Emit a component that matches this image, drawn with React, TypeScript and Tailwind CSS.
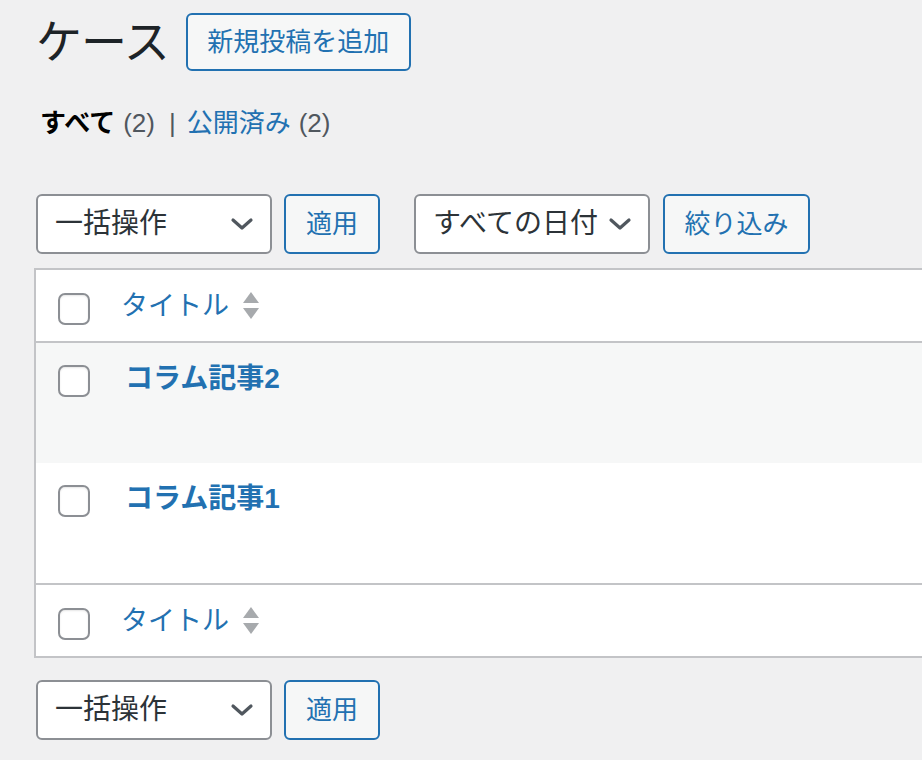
import React from "react";

const font = { fontFamily: '"Liberation Sans", "Noto Sans CJK JP", sans-serif' };

function Chevron() {
  return (
    <svg width="24" height="14" viewBox="0 0 24 14" className="shrink-0">
      <polyline points="3,3 12,11 21,3" fill="none" stroke="#50575e" strokeWidth="3.2" strokeLinecap="round" strokeLinejoin="round" />
    </svg>
  );
}

function Select({ label, w }: { label: string; w: string }) {
  return (
    <div className={`${w} h-[60px] flex items-center justify-between rounded-[6px] border-2 border-[#8c8f94] bg-white pl-[17px] pr-[16px] text-[28px] text-[#2c3338]`}>
      <span>{label}</span>
      <Chevron />
    </div>
  );
}

function Button({ label, w }: { label: string; w: string }) {
  return (
    <div className={`${w} h-[60px] flex items-center justify-center rounded-[6px] border-2 border-[#2271b1] bg-[#f6f7f7] text-[26px] text-[#2271b1]`}>
      {label}
    </div>
  );
}

function Checkbox() {
  return <div className="w-[32px] h-[32px] rounded-[7px] border-2 border-[#8c8f94] bg-white shrink-0 shadow-[inset_0_1px_2px_rgba(0,0,0,0.1)]" />;
}

function SortArrows() {
  return (
    <svg width="18" height="30" viewBox="0 0 18 30" className="ml-[13px] shrink-0">
      <polygon points="9,1 17,12 1,12" fill="#a7aaad" />
      <polygon points="1,17 17,17 9,28" fill="#a7aaad" />
    </svg>
  );
}

function HeaderRow({ border }: { border: "top" | "bottom" }) {
  return (
    <div className={`h-[73px] flex items-start pl-[22px] ${border === "bottom" ? "border-b-2" : "border-t-2"} border-[#c3c4c7]`}>
      <div className="pt-[23px]"><Checkbox /></div>
      <div className="flex items-center ml-[31px] pt-[18px]">
        <span className="text-[27px] text-[#2271b1] leading-[36px]">タイトル</span>
        <SortArrows />
      </div>
    </div>
  );
}

function Row({ title, bg }: { title: string; bg: string }) {
  return (
    <div className={`h-[120px] flex items-start pl-[22px] ${bg}`}>
      <div className="pt-[22px]"><Checkbox /></div>
      <div className="ml-[35px] pt-[18px] text-[28px] font-bold text-[#2271b1] leading-[36px]">{title}</div>
    </div>
  );
}

export default function App() {
  return (
    <div className="min-h-[760px] w-[922px] overflow-hidden bg-[#f0f0f1] text-[#1d2327]" style={font}>
      <div className="pl-[36px]">
        <div className="flex items-center h-[58px] mt-[13px]">
          <h1 className="text-[46px] leading-[58px] font-normal text-[#1d2327] tracking-[-1px]">ケース</h1>
          <div className="ml-[17px] h-[58px] w-[225px] flex items-center justify-center rounded-[6px] border-2 border-[#2271b1] bg-[#f6f7f7] text-[26px] text-[#2271b1]">
            新規投稿を追加
          </div>
        </div>
        <div className="mt-[32px] h-[40px] flex items-center text-[26px] pl-[4px]">
          <span className="font-bold text-black">すべて</span>
          <span className="ml-[8px] text-[#50575e]">(2)</span>
          <span className="ml-[14px] text-[#50575e]">|</span>
          <span className="ml-[11px] text-[#2271b1]">公開済み</span>
          <span className="ml-[8px] text-[#50575e]">(2)</span>
        </div>
        <div className="mt-[51px] flex items-center">
          <Select label="一括操作" w="w-[236px]" />
          <div className="ml-[12px]"><Button label="適用" w="w-[96px]" /></div>
          <div className="ml-[34px]"><Select label="すべての日付" w="w-[236px]" /></div>
          <div className="ml-[13px]"><Button label="絞り込み" w="w-[147px]" /></div>
        </div>
      </div>
      <div className="ml-[34px] mt-[14px] w-[900px] border-2 border-r-0 border-[#c3c4c7] bg-white">
        <HeaderRow border="bottom" />
        <Row title="コラム記事2" bg="bg-[#f6f7f7]" />
        <Row title="コラム記事1" bg="bg-white" />
        <HeaderRow border="top" />
      </div>
      <div className="pl-[36px] mt-[22px] flex items-center">
        <Select label="一括操作" w="w-[236px]" />
        <div className="ml-[12px]"><Button label="適用" w="w-[96px]" /></div>
      </div>
    </div>
  );
}
